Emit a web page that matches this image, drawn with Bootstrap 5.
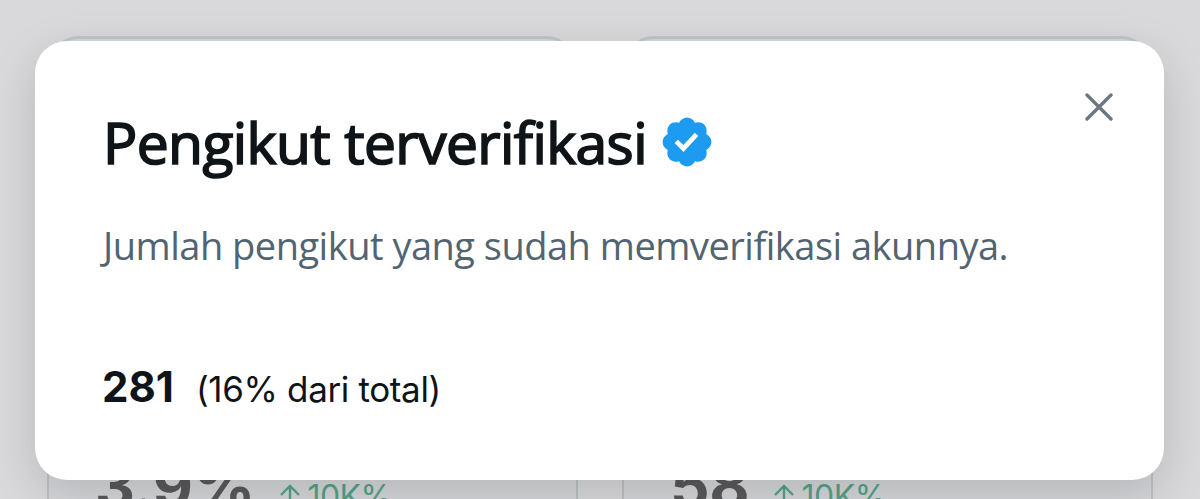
<!DOCTYPE html>
<html lang="id">
<head>
    <title>Pengikut terverifikasi</title>
    <meta charset="utf-8">
    <meta name="viewport" content="width=device-width, initial-scale=1">
    <link href="https://cdn.jsdelivr.net/npm/bootstrap@5.3.1/dist/css/bootstrap.min.css" rel="stylesheet">
    <script src="https://cdn.jsdelivr.net/npm/bootstrap@5.3.1/dist/js/bootstrap.bundle.min.js"></script>
    <style>
        body {
            height: 499px;
            background: #d9d9db;
            font-family: "Open Sans", "Liberation Sans", sans-serif;
            color: #0f1419;
        }

        /* dimmed dashboard behind the dialog */
        .stats {
            height: 499px;
            padding: 36px 47px 0;
            gap: 44px;
        }

        .stat-box {
            height: 530px;
            border: 2px solid #bcc1c4;
            border-top: 3px solid #bec6c8;
            border-radius: 32px;
            background: linear-gradient(#d2d9da, #d5d6d9 60px);
            padding: 0 0 0 46px;
        }

        .stat-line {
            margin-top: 411px;
            font-family: Inter, "Liberation Sans", sans-serif;
            white-space: nowrap;
        }

        .stat-value {
            font-size: 62px;
            line-height: 72px;
            font-weight: 700;
            letter-spacing: -.5px;
            color: #59595c;
        }

        .stat-change {
            font-size: 32px;
            line-height: 40px;
            letter-spacing: -.5px;
            color: #55a388;
            margin-left: 25px;
        }

        .stat-change svg {
            margin: -3px -1px 3px 0;
        }

        .dialog-layer {
            padding: 41px 36px 19px 35px;
        }

        .dialog-box {
            border-radius: 32px;
            padding: 63px 51px 0 68px;
            box-shadow: 0 14px 45px rgba(0, 0, 0, .15);
        }

        .dialog-title {
            font-size: 57px;
            line-height: 76px;
            font-weight: 400;
            letter-spacing: -.6px;
            -webkit-text-stroke: 1.7px #0f1419;
        }

        .verified {
            width: 50px;
            height: 50px;
            margin-left: 15px;
        }

        .close-btn {
            width: 28px;
            height: 28px;
            margin-top: -11px;
        }

        .dialog-desc {
            font-size: 38px;
            line-height: 52px;
            letter-spacing: -.5px;
            color: #536471;
            margin-top: 39px;
            white-space: nowrap;
        }

        .total-line {
            font-family: Inter, "Liberation Sans", sans-serif;
            margin: 91px 0 0 -1px;
            line-height: 50px;
        }

        .total-count {
            font-size: 42px;
            font-weight: 700;
        }

        .total-share {
            font-size: 35px;
            letter-spacing: -.35px;
            margin-left: 22px;
        }
    </style>
</head>
<body class="overflow-hidden position-relative">
    <div class="stats d-flex overflow-hidden">
        <div class="stat-box flex-fill w-50">
            <div class="stat-line d-flex align-items-baseline">
                <span class="stat-value">3.9%</span>
                <span class="stat-change"><svg width="20" height="24" viewBox="0 0 20 24" fill="none" stroke="currentColor" stroke-width="2.4"><path d="M10 24V2M1 11l9-9 9 9"/></svg> 10K%</span>
            </div>
        </div>
        <div class="stat-box flex-fill w-50">
            <div class="stat-line d-flex align-items-baseline">
                <span class="stat-value">58</span>
                <span class="stat-change"><svg width="20" height="24" viewBox="0 0 20 24" fill="none" stroke="currentColor" stroke-width="2.4"><path d="M10 24V2M1 11l9-9 9 9"/></svg> 10K%</span>
            </div>
        </div>
    </div>

    <div class="dialog-layer position-absolute top-0 start-0 w-100 h-100">
        <div class="dialog-box bg-white h-100">
            <div class="d-flex justify-content-between">
                <div class="d-flex align-items-center">
                    <h1 class="dialog-title mb-0">Pengikut terverifikasi</h1>
                    <svg class="verified" viewBox="1.5 1.5 21 21" aria-label="Terverifikasi">
                        <path fill="#1d9bf0" d="M22.25 12c0-1.43-.88-2.67-2.19-3.34.46-1.39.2-2.9-.81-3.91s-2.52-1.27-3.91-.81c-.66-1.31-1.91-2.19-3.34-2.19s-2.67.88-3.33 2.19c-1.4-.46-2.91-.2-3.92.81s-1.26 2.52-.8 3.91c-1.31.67-2.2 1.91-2.2 3.34s.89 2.67 2.2 3.34c-.46 1.39-.21 2.9.8 3.91s2.52 1.26 3.91.81c.67 1.31 1.91 2.19 3.34 2.19s2.68-.88 3.34-2.19c1.39.45 2.9.2 3.91-.81s1.27-2.52.81-3.91c1.31-.67 2.19-1.91 2.19-3.34z"/>
                        <path fill="#fff" d="M10.54 16.2L6.8 12.46l1.41-1.42 2.26 2.26 4.8-5.23 1.47 1.36-6.2 6.77z"/>
                    </svg>
                </div>
                <svg class="close-btn" viewBox="0 0 28 28" fill="none" stroke="#6c7780" stroke-width="3.4" stroke-linecap="round" role="button" aria-label="Tutup">
                    <path d="M2 2l24 24M26 2L2 26"/>
                </svg>
            </div>
            <p class="dialog-desc mb-0">Jumlah pengikut yang sudah memverifikasi akunnya.</p>
            <div class="total-line d-flex align-items-baseline">
                <span class="total-count">281</span>
                <span class="total-share">(16% dari total)</span>
            </div>
        </div>
    </div>
</body>
</html>
